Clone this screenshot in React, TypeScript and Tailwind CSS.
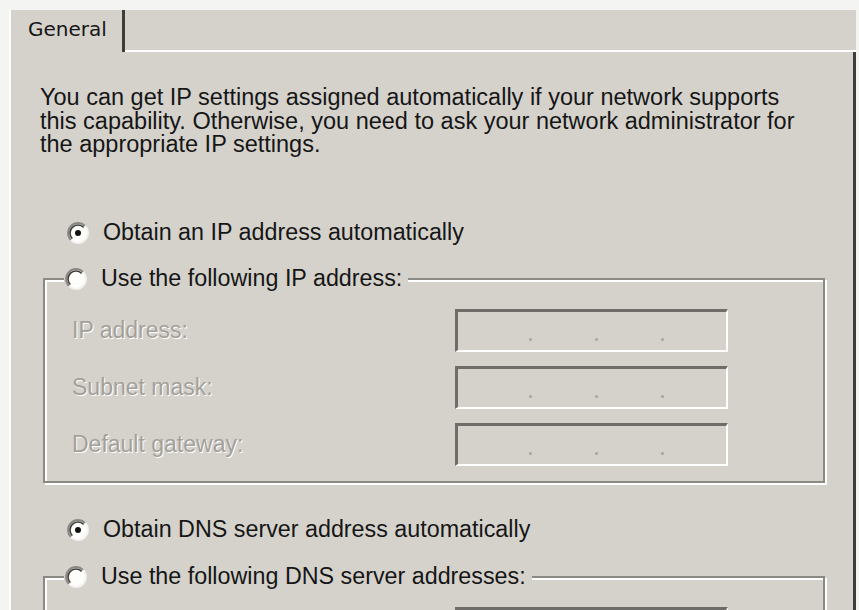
import React from 'react';

const font = { fontFamily: '"Liberation Sans", Arial, sans-serif' };
const wide = { fontFamily: '"DejaVu Sans", Verdana, sans-serif' };

const Radio: React.FC<{ checked?: boolean }> = ({ checked }) => (
  <svg width="24" height="24" viewBox="0 0 24 24" className="shrink-0">
    <circle cx="12" cy="12" r="10" fill="#fdfdfc" />
    <path d="M4.93 19.07 A10 10 0 0 1 19.07 4.93" fill="none" stroke="#8a8782" strokeWidth="2" />
    <path d="M6.34 17.66 A8 8 0 0 1 17.66 6.34" fill="none" stroke="#3f3e3b" strokeWidth="1.6" />
    <path d="M19.07 4.93 A10 10 0 0 1 4.93 19.07" fill="none" stroke="#f4f3f0" strokeWidth="2" />
    {checked && <circle cx="12" cy="12" r="3" fill="#111" />}
  </svg>
);

const IpBox: React.FC = () => (
  <div className="w-[273px] h-[43px] border-t-[3px] border-l-[3px] border-[#6f6d69] border-b-2 border-r-2 border-b-white border-r-white flex items-end pb-[9px]">
    <div className="flex w-full pl-[71px] gap-[63px]">
      <span className="w-[3px] h-[3px] rounded-full bg-[#a8a5a0]" />
      <span className="w-[3px] h-[3px] rounded-full bg-[#a8a5a0]" />
      <span className="w-[3px] h-[3px] rounded-full bg-[#a8a5a0]" />
    </div>
  </div>
);

const Field: React.FC<{ label?: string }> = ({ label }) => (
  <div className="flex items-center h-[43px]">
    <div className="w-[391px] pl-[8px] text-[23px] text-[#a3a09a] [text-shadow:1px_1px_0_#ffffff]">{label}</div>
    <IpBox />
  </div>
);

export default function App() {
  return (
    <div className="w-[859px] h-[610px] overflow-hidden bg-[#f4f4f2] pt-[10px] pl-[9px] pr-[3px] text-[#161616]" style={font}>
      {/* tab strip */}
      <div className="flex h-[42px] bg-[#d5d2cc]">
        <div className="w-[116px] border-l-2 border-l-white border-r-[3px] border-r-[#3e3d3a] pl-[17px] pt-[7px] text-[20px] leading-[24px]" style={wide}>
          General
        </div>
        <div className="flex-1 border-b-2 border-white" />
      </div>

      <div className="h-[600px] bg-[#d5d2cc] border-l-2 border-l-white border-r-[3px] border-r-[#3e3d3a]">
        <p className="pt-[34px] pl-[29px] text-[23.5px] leading-[23.5px] whitespace-nowrap">
          You can get IP settings assigned automatically if your network supports
          <br />
          this capability. Otherwise, you need to ask your network administrator for
          <br />
          the appropriate IP settings.
        </p>

        <div className="mt-[64px] ml-[55px] flex items-center gap-[13px] h-[24px] text-[23.3px]">
          <Radio checked />
          <span>Obtain an IP address automatically</span>
        </div>

        <fieldset className="mt-[22px] ml-[32px] w-[782px] border-2 border-[#8b8984] pl-[19px] pb-[15px] shadow-[inset_2px_2px_0_#ffffff,2px_2px_0_#ffffff]">
          <legend className="bg-[#d5d2cc] pr-[6px] flex items-center gap-[13px] h-[24px] text-[23.3px]">
            <Radio />
            <span>Use the following IP address:</span>
          </legend>
          <div className="mt-[18px] flex flex-col gap-[14px]">
            <Field label="IP address:" />
            <Field label="Subnet mask:" />
            <Field label="Default gateway:" />
          </div>
        </fieldset>

        <div className="mt-[35px] ml-[55px] flex items-center gap-[13px] h-[24px] text-[23.3px]">
          <Radio checked />
          <span>Obtain DNS server address automatically</span>
        </div>

        <fieldset className="mt-[23px] ml-[32px] w-[782px] border-2 border-[#8b8984] pl-[19px] pb-[15px] shadow-[inset_2px_2px_0_#ffffff,2px_2px_0_#ffffff]">
          <legend className="bg-[#d5d2cc] pr-[6px] flex items-center gap-[13px] h-[24px] text-[23.3px]">
            <Radio />
            <span>Use the following DNS server addresses:</span>
          </legend>
          <div className="mt-[18px] flex flex-col gap-[14px]">
            <Field />
            <Field />
          </div>
        </fieldset>
      </div>
    </div>
  );
}
